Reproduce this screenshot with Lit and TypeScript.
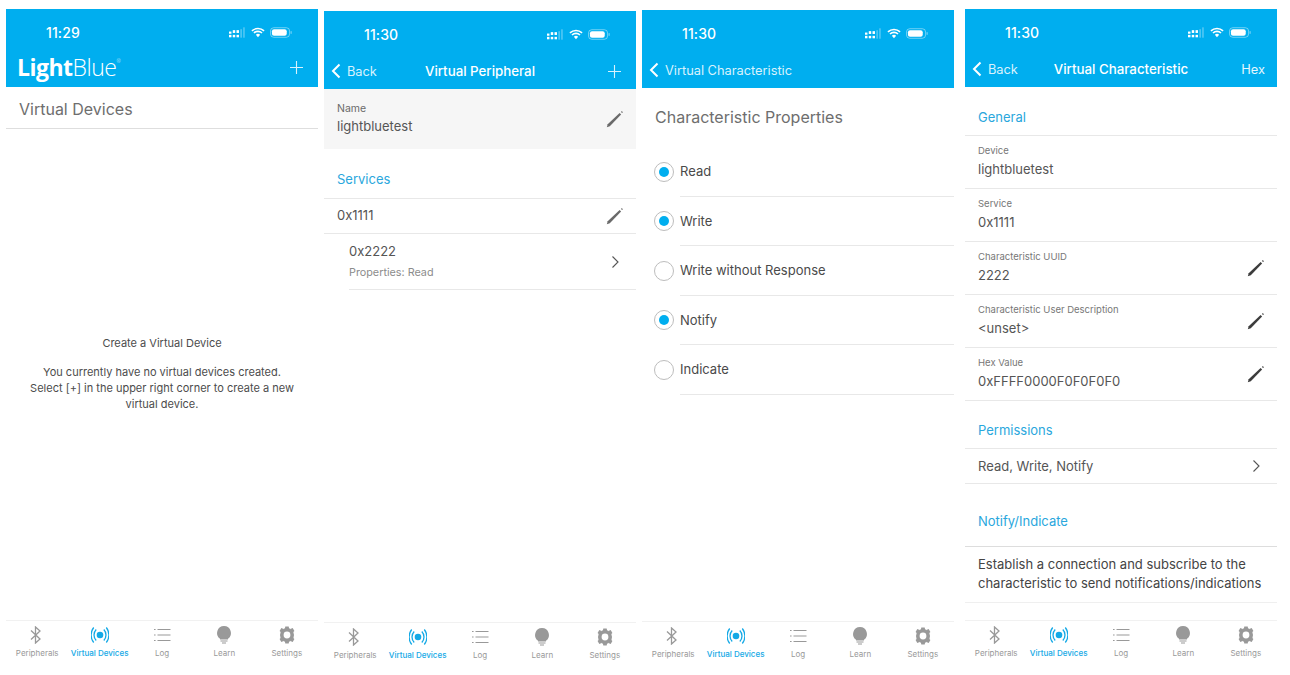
import { LitElement, html, css, svg } from 'lit';
import { customElement } from 'lit/decorators.js';

const pencil = (dark = false) => html`
  <svg class="pencil ${dark ? 'dark' : ''}" width="18" height="18" viewBox="0 0 18 18">
    <path d="M.8 17.200l.9-3L13.600 2.900l1.500 1.500L3.800 16.300z" fill="currentColor"/>
    <path d="M15 1.900l.8-.8 1.100 1.100-.8.8z" fill="currentColor"/>
  </svg>`;

const chevron = html`
  <svg class="chevron" width="9" height="14" viewBox="0 0 9 14"><path d="M1.500 1.500L7 7l-5.500 5.500" fill="none" stroke="#555" stroke-width="1.100"/></svg>`;

const backArrow = html`
  <svg class="back-arrow" width="10" height="16" viewBox="0 0 10 16"><path d="M8.500 1.500L2 8l6.500 6.500" fill="none" stroke="#fff" stroke-width="2"/></svg>`;

const plus = html`
  <svg width="13" height="13" viewBox="0 0 13 13"><path d="M6.500 0v13M0 6.500h13" stroke="#d8f2fd" stroke-width="1.100"/></svg>`;

const signal = svg`
  <svg class="sig" width="16" height="11" viewBox="0 0 17 11">
    <g fill="#fff">
      <rect x="0" y="4.500" width="2.600" height="2.300"/><rect x="0" y="8" width="2.600" height="2.600"/>
      <rect x="4" y="3" width="2.600" height="3"/><rect x="4" y="8" width="2.600" height="2.600"/>
      <rect x="8" y="3" width="2.600" height="3"/><rect x="8" y="8" width="2.600" height="2.600"/>
    </g>
    <rect x="12" y="2" width="1.800" height="9" fill="#fff" opacity=".3"/>
    <rect x="15" y="0" width="1.800" height="11" fill="#fff" opacity=".3"/>
  </svg>`;

const wifi = svg`
  <svg width="14" height="11" viewBox="0 0 15 11">
    <path d="M1 3.800a9.400 9.400 0 0 1 13 0M3.200 6a6.200 6.200 0 0 1 8.600 0" fill="none" stroke="#fff" stroke-width="1.700"/>
    <path d="M5.200 8a3.300 3.300 0 0 1 4.600 0L7.500 10.600z" fill="#fff"/>
  </svg>`;

const battery = svg`
  <svg width="22" height="11" viewBox="0 0 23 11">
    <rect x=".5" y=".5" width="20" height="10" rx="3.500" fill="none" stroke="#fff" stroke-opacity=".45"/>
    <rect x="2" y="2" width="15.500" height="7" rx="2.200" fill="#fff"/>
    <rect x="21.500" y="4" width="1.200" height="3" rx=".6" fill="#fff" opacity=".45"/>
  </svg>`;

const tabs = [
  {
    label: 'Peripherals',
    icon: svg`<path d="M3 4.500l9 8.500-4.500 4V1L12 5 3 13.500" fill="none" stroke="currentColor" stroke-width="1.300"/>`,
  },
  {
    label: 'Virtual Devices',
    icon: svg`<circle cx="9" cy="9" r="3.300" fill="currentColor"/>
      <path d="M5.200 3.500a8 8 0 0 0 0 11M12.800 3.500a8 8 0 0 1 0 11M2.700 1.500a12 12 0 0 0 0 15M15.300 1.500a12 12 0 0 1 0 15" fill="none" stroke="currentColor" stroke-width="1.300"/>`,
  },
  {
    label: 'Log',
    icon: svg`<path d="M4.500 3.500h13M4.500 9h13M4.500 14.500h13" stroke="currentColor" stroke-width="1.100"/>
      <path d="M1 3.500h1.600M1 9h1.600M1 14.500h1.600" stroke="currentColor" stroke-width="1.100"/>`,
  },
  {
    label: 'Learn',
    icon: svg`<path d="M9 0a7 7 0 0 0-4 12.700V13.500h8v-.8A7 7 0 0 0 9 0z" fill="currentColor"/>
      <path d="M5.500 15h7M7 17h4" stroke="currentColor" stroke-width="1.200"/>`,
  },
  {
    label: 'Settings',
    icon: svg`<circle cx="9" cy="9" r="5.200" fill="none" stroke="currentColor" stroke-width="3.600"/>
      <path d="M7.300 .5h3.400l.5 2.500-4.400 0zM7.300 17.500h3.400l.5-2.500-4.400 0zM1.600 5l1.700-3 2.400.9L3.500 6.700zM16.400 5l-1.700-3-2.400.9 2.200 3.800zM1.600 13l1.700 3 2.400-.9-2.200-3.800zM16.400 13l-1.700 3-2.400-.9 2.200-3.800z" fill="currentColor"/>`,
  },
];

@customElement('status-bar')
export class StatusBar extends LitElement {
  static properties = { time: { type: String } };
  time = '';

  static styles = css`
    :host { display: flex; align-items: center; height: 18px; padding: 14px 26px 0 40px; }
    .time { font: 500 14px Inter, sans-serif; color: #fff; letter-spacing: .1px; }
    .icons { margin-left: auto; display: flex; align-items: center; gap: 5px; }
    svg { display: block; }
    .sig { margin-right: 1px; }
  `;

  render() {
    return html`<span class="time">${this.time}</span><span class="icons">${signal}${wifi}${battery}</span>`;
  }
}

@customElement('tab-bar')
export class TabBar extends LitElement {
  static styles = css`
    :host { display: grid; grid-template-columns: repeat(5, 1fr); height: 39px; border-top: 1px solid #f1f1f1; margin-top: auto; }
    .tab { display: flex; flex-direction: column; align-items: center; color: #999; font: 8px Inter, sans-serif; }
    .tab.active { color: #14a9e6; font-weight: 500; }
    svg { display: block; margin-top: 5px; }
    span { margin-top: 3px; line-height: 12px; white-space: nowrap; }
  `;

  render() {
    return tabs.map((t) => html`
      <div class="tab ${t.label === 'Virtual Devices' ? 'active' : ''}">
        <svg width="18" height="18" viewBox="0 0 18 18">${t.icon}</svg>
        <span>${t.label}</span>
      </div>`);
  }
}

@customElement('app-root')
export class AppRoot extends LitElement {
  static styles = css`
    :host { display: flex; align-items: flex-start; padding-left: 6px; font-family: Inter, sans-serif; color: #4a4a4a; background: #fff; height: 675px; box-sizing: border-box; }
    .panel { display: flex; flex-direction: column; width: 312px; height: 651px; flex: none; margin-right: 6px; }
    .p1 { margin-top: 9px; }
    .p2 { margin-top: 11px; }
    .p3 { margin-top: 10px; margin-right: 11px; }
    .p4 { margin-top: 9px; }

    .head { background: #00aeef; height: 78px; flex: none; color: #fff; }
    .nav { display: grid; grid-template-columns: 1fr auto 1fr; align-items: center; height: 28px; margin-top: 14px; padding: 0 7px; font-size: 12.800px; }
    .nav .left { display: flex; align-items: center; gap: 6px; color: #d8f2fd; white-space: nowrap; }
    .nav .mid { font-weight: 500; font-size: 13.300px; white-space: nowrap; }
    .nav .right { justify-self: end; color: #e6f7fe; display: flex; margin-right: 8px; }
    .nav .right.hex { margin-right: 5px; }
    .nav.logo-nav { margin-top: 12px; padding-left: 11px; }
    .logo { font: 300 23px/28px "Open Sans", sans-serif; letter-spacing: -.5px; white-space: nowrap; }
    .logo b { font-weight: 700; }
    .logo sup { font-size: 5px; vertical-align: 13px; line-height: 0; }

    .title { font-size: 16px; color: #6e6e6e; }
    .title-row { height: 38px; padding: 3px 0 0 13px; display: flex; align-items: center; border-bottom: 1px solid #dedede; }

    .empty { font-size: 11px; line-height: 16px; text-align: center; padding: 206px 20px 0; color: #4c4c4c; }
    .empty p { margin: 13px 0 0; }

    .name-row { background: #f6f6f6; height: 60px; flex: none; }
    .row { display: flex; align-items: center; padding: 0 12px 0 13px; box-sizing: border-box; border-bottom: 1px solid #e8e8e8; flex: none; }
    .name-row.row { border: 0; }
    .stack { display: flex; flex-direction: column; }
    .label { font-size: 10.500px; line-height: 14px; color: #6a6a6a; }
    .value { font-size: 13px; line-height: 20px; color: #555; }
    .end { margin-left: auto; display: flex; }
    .pencil { color: #6a6a6a; display: block; }
    .pencil.dark { color: #3c3c3c; }

    .section { display: flex; align-items: flex-end; padding: 0 13px 10px; box-sizing: border-box; color: #2aa7dd; font-size: 13px; line-height: 16px; border-bottom: 1px solid #e8e8e8; flex: none; }
    .services { height: 50px; padding-bottom: 11px; }

    .svc { height: 35px; }
    .svc .value { margin-bottom: 2px; }
    .char-row { height: 56px; margin-left: 25px; padding-left: 0; padding-right: 16px; }
    .char-row .stack { margin-bottom: 3px; }
    .char-row .label { font-size: 10.800px; margin-top: 5px; color: #8c8c8c; }

    .p3-title { height: 59px; padding: 0 0 2px 13px; display: flex; align-items: center; flex: none; box-sizing: border-box; }
    .radio-row { display: flex; height: 49.500px; align-items: center; flex: none; padding-left: 12px; box-sizing: border-box; }
    .circle { width: 20px; height: 20px; border: 1px solid #bdbdbd; border-radius: 50%; box-sizing: border-box; display: flex; align-items: center; justify-content: center; flex: none; margin-right: 6px; }
    .circle i { width: 10px; height: 10px; background: #00aeef; border-radius: 50%; }
    .radio-text { flex: 1; align-self: stretch; display: flex; align-items: center; font-size: 13px; color: #4a4a4a; border-bottom: 1px solid #e8e8e8; }

    .gen { height: 49px; }
    .info { height: 53px; padding-right: 12px; }
    .info .stack { margin-bottom: 1px; }
    .info .label { color: #777; font-size: 9.500px; margin-bottom: 1px; }
    .perm { height: 48px; }
    .perm-row { height: 35px; padding-right: 16px; }
    .notify { height: 63px; padding-bottom: 17px; border-bottom-color: #ddd; }
    .desc { font-size: 13px; line-height: 19px; color: #444; padding: 8px 0 8px 13px; border-bottom: 1px solid #efefef; box-sizing: border-box; height: 56px; flex: none; }
  `;

  private head(time: string, nav: unknown) {
    return html`<div class="head"><status-bar time=${time}></status-bar>${nav}</div>`;
  }

  private panel1() {
    return html`<section class="panel p1">
      ${this.head('11:29', html`<div class="nav logo-nav">
        <div class="logo"><b>Light</b>Blue<sup>®</sup></div><span></span><div class="right">${plus}</div>
      </div>`)}
      <div class="title-row title">Virtual Devices</div>
      <div class="empty">
        Create a Virtual Device
        <p>You currently have no virtual devices created.<br>Select [+] in the upper right corner to create a new virtual device.</p>
      </div>
      <tab-bar></tab-bar>
    </section>`;
  }

  private panel2() {
    return html`<section class="panel p2">
      ${this.head('11:30', html`<div class="nav">
        <div class="left">${backArrow}Back</div><div class="mid">Virtual Peripheral</div><div class="right">${plus}</div>
      </div>`)}
      <div class="row name-row">
        <div class="stack"><span class="label">Name</span><span class="value">lightbluetest</span></div>
        <span class="end">${pencil()}</span>
      </div>
      <div class="section services">Services</div>
      <div class="row svc"><span class="value">0x1111</span><span class="end">${pencil()}</span></div>
      <div class="row char-row">
        <div class="stack"><span class="value">0x2222</span><span class="label">Properties: Read</span></div>
        <span class="end">${chevron}</span>
      </div>
      <tab-bar></tab-bar>
    </section>`;
  }

  private panel3() {
    const props = [['Read', true], ['Write', true], ['Write without Response', false], ['Notify', true], ['Indicate', false]] as const;
    return html`<section class="panel p3">
      ${this.head('11:30', html`<div class="nav"><div class="left">${backArrow}Virtual Characteristic</div></div>`)}
      <div class="p3-title title">Characteristic Properties</div>
      ${props.map(([name, on]) => html`<div class="radio-row">
        <span class="circle">${on ? html`<i></i>` : ''}</span><span class="radio-text">${name}</span>
      </div>`)}
      <tab-bar></tab-bar>
    </section>`;
  }

  private panel4() {
    const rows = [
      ['Device', 'lightbluetest', false],
      ['Service', '0x1111', false],
      ['Characteristic UUID', '2222', true],
      ['Characteristic User Description', '<unset>', true],
      ['Hex Value', '0xFFFF0000F0F0F0F0', true],
    ] as const;
    return html`<section class="panel p4">
      ${this.head('11:30', html`<div class="nav">
        <div class="left">${backArrow}Back</div><div class="mid">Virtual Characteristic</div><div class="right hex">Hex</div>
      </div>`)}
      <div class="section gen">General</div>
      ${rows.map(([label, value, edit]) => html`<div class="row info">
        <div class="stack"><span class="label">${label}</span><span class="value">${value}</span></div>
        ${edit ? html`<span class="end">${pencil(true)}</span>` : ''}
      </div>`)}
      <div class="section perm">Permissions</div>
      <div class="row perm-row"><span class="value">Read, Write, Notify</span><span class="end">${chevron}</span></div>
      <div class="section notify">Notify/Indicate</div>
      <div class="desc">Establish a connection and subscribe to the characteristic to send notifications/indications</div>
      <tab-bar></tab-bar>
    </section>`;
  }

  render() {
    return html`${this.panel1()}${this.panel2()}${this.panel3()}${this.panel4()}`;
  }
}
